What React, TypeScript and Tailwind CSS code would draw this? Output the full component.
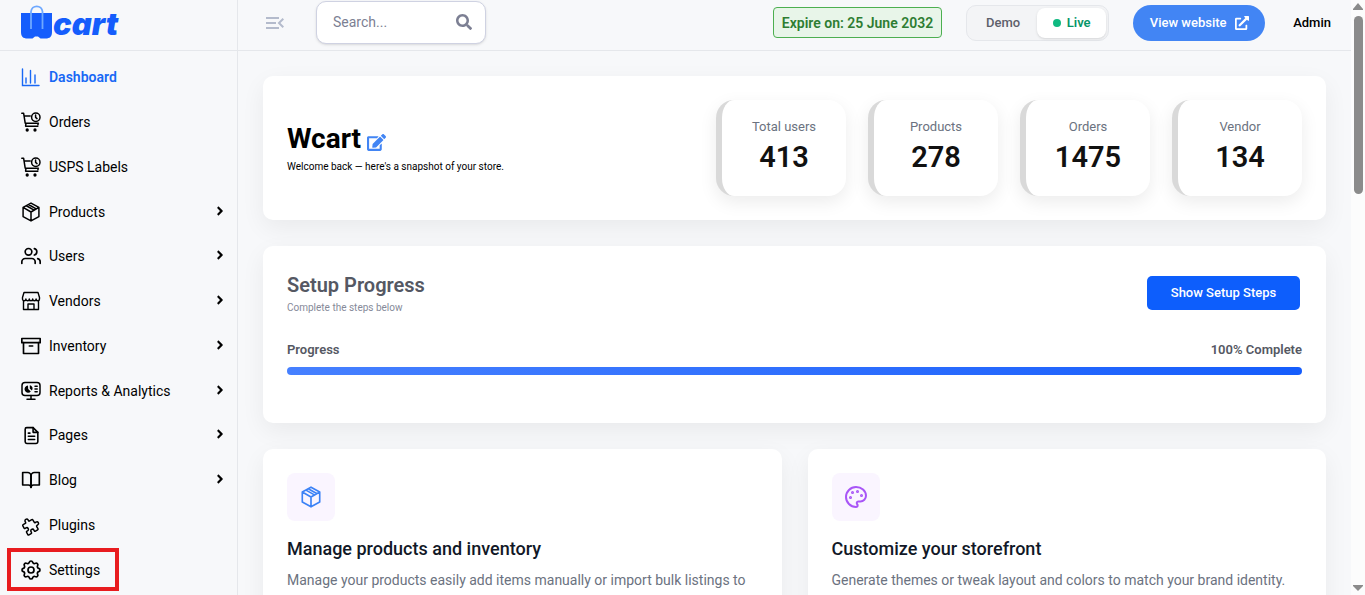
import type { ReactNode } from "react";
import { FaAngleRight, FaEdit, FaExternalLinkAlt, FaSearch } from "react-icons/fa";
import { FiArchive, FiBookOpen, FiFileText, FiUsers } from "react-icons/fi";
import { LuPalette } from "react-icons/lu";
import { MdMenuOpen } from "react-icons/md";
import { TbPuzzle, TbSettings } from "react-icons/tb";

const ChartIcon = () => (
  <svg className="size-5" viewBox="0 0 20 20" fill="none" stroke="currentColor" strokeWidth="1.4" strokeLinecap="round">
    <path d="M1.500 2v16.500h16.500M5 11v5M9.500 3.500v12.500M14 8v8" />
  </svg>
);

const CartClockIcon = () => (
  <svg className="size-5" viewBox="0 0 20 20" fill="none" stroke="currentColor" strokeWidth="1.5" strokeLinecap="round" strokeLinejoin="round">
    <path d="M.8 1.200h1.800l1.600 10h13.200M3.200 4h6M5 11.200l-.4 3h12.200M17 11.200v1.600" />
    <circle cx="14.800" cy="5.200" r="4.200" />
    <path d="M14.600 3v2.400l1.400 1.200" />
    <circle cx="6.200" cy="18" r=".9" fill="currentColor" />
    <circle cx="14" cy="18" r=".9" fill="currentColor" />
  </svg>
);

const BoxIcon = () => (
  <svg className="size-full" viewBox="0 0 24 24" fill="none" stroke="currentColor" strokeWidth="1.8" strokeLinejoin="round">
    <path d="M12 1.300 21.500 6.500v11L12 22.700 2.500 17.500v-11zM2.500 6.500 12 12l9.500-5.500M12 12v10.700M6.500 4.500l9.200 5.200M9 3l9.200 5.200" />
  </svg>
);

const StoreIcon = () => (
  <svg className="size-5" viewBox="0 0 20 20" fill="none" stroke="currentColor" strokeWidth="1.4" strokeLinejoin="round">
    <path d="M3 1.500h14l1.500 5v1.500c0 2.400-3.400 2.400-3.400 0 0 2.400-3.400 2.400-3.400 0 0 2.400-3.400 2.400-3.400 0 0 2.400-3.400 2.400-3.400 0 0 2.400-3.400 2.400-3.400 0V6.500zM2.500 9.500v9h15v-9M7 18.500V13h6v5.500" />
  </svg>
);

const ReportIcon = () => (
  <svg className="size-5" viewBox="0 0 20 20" fill="none" stroke="currentColor" strokeWidth="1.5" strokeLinecap="round">
    <rect x="1" y="1.500" width="18" height="13" rx="3" />
    <path d="M10 14.500v3.500M6 18.200h8M14 5.300h2.200M14 8h2.200M14 10.700h2.200" />
    <path d="M7 4.500a3.600 3.600 0 1 0 2.800 6L7.200 8zM8.800 4.200v3.400l2 2c1.600-2.200.6-4.800-2-5.400z" fill="currentColor" stroke="none" />
  </svg>
);

type NavItem = {
  label: string;
  icon: ReactNode;
  active?: boolean;
  hasMenu?: boolean;
  marked?: boolean;
};

const navItems: NavItem[] = [
  { label: "Dashboard", icon: <ChartIcon />, active: true },
  { label: "Orders", icon: <CartClockIcon /> },
  { label: "USPS Labels", icon: <CartClockIcon /> },
  { label: "Products", icon: <BoxIcon />, hasMenu: true },
  { label: "Users", icon: <FiUsers className="size-5" />, hasMenu: true },
  { label: "Vendors", icon: <StoreIcon />, hasMenu: true },
  { label: "Inventory", icon: <FiArchive className="size-5" />, hasMenu: true },
  { label: "Reports & Analytics", icon: <ReportIcon />, hasMenu: true },
  { label: "Pages", icon: <FiFileText className="size-[19px]" />, hasMenu: true },
  { label: "Blog", icon: <FiBookOpen className="size-5" />, hasMenu: true },
  { label: "Plugins", icon: <TbPuzzle className="size-5 -rotate-30" strokeWidth={1.8} /> },
  { label: "Settings", icon: <TbSettings className="size-6 shrink-0" strokeWidth={1.7} />, marked: true },
];

const stats = [
  { label: "Total users", value: 413 },
  { label: "Products", value: 278 },
  { label: "Orders", value: 1475 },
  { label: "Vendor", value: 134 },
];

const Logo = () => (
  <a href="#" className="flex items-start text-[#155dfc]" aria-label="Wcart">
    <svg className="h-9 w-8 shrink-0" viewBox="0 0 32 36" fill="none">
      <path d="M0 9h31v19c0 4.500-2 6.500-6.500 6.500h-5l-2.500-2h-3l-2.500 2h-5C2 34.500 0 32.500 0 28z" fill="#155dfc" />
      <path d="M10 25V7.500a5.800 6 0 0 1 11.500 0V25" stroke="#6ea8ff" strokeWidth="1.800" />
    </svg>
    <span className="font-['Inter'] text-[31px] leading-10 font-black italic">cart</span>
  </a>
);

const Sidebar = () => (
  <aside className="flex w-[238px] shrink-0 flex-col border-r border-[#e5e7eb]">
    <div className="h-[51px] shrink-0 border-b border-[#e5e7eb] pt-1 pl-[21px]">
      <Logo />
    </div>
    <nav className="flex flex-1 flex-col pt-1 pb-[3px]">
      {navItems.map((item) => (
        <a
          key={item.label}
          href="#"
          className={`relative flex min-h-10 flex-1 items-center pr-2.5 pl-[21px] text-sm ${item.active ? "font-semibold text-[#1868f5]" : "text-black"}`}
        >
          <span className="flex size-5 shrink-0 items-center justify-center">{item.icon}</span>
          <span className="ml-2 flex-1">{item.label}</span>
          {item.hasMenu && <FaAngleRight className="mb-0.5 size-3.5" />}
          {item.marked && <span className="absolute inset-y-px left-[7px] w-28 border-4 border-[#e81c1f]" />}
        </a>
      ))}
    </nav>
  </aside>
);

const Header = () => (
  <header className="flex h-[51px] shrink-0 items-start border-b border-[#e5e7eb] pr-5 pl-[25px]">
    <button type="button" aria-label="Collapse menu" className="mt-[11px] text-[#b4bbcc]">
      <MdMenuOpen className="size-6" />
    </button>
    <label className="mt-px ml-[29px] flex h-[43px] w-[170px] items-center rounded-[10px] border border-[#cfd2e2] bg-white px-4 pb-0.5 shadow-sm">
      <input
        type="text"
        aria-label="Search"
        placeholder="Search..."
        className="w-0 flex-1 text-sm outline-none placeholder:text-[#7c7f93]"
      />
      <FaSearch className="mr-[-3px] size-4 text-[#7c7f93]" />
    </label>
    <div className="mt-[7px] ml-auto flex h-[31px] items-center rounded border border-[#4caf50] bg-[#e8f5e9] px-2 text-sm font-semibold whitespace-nowrap text-[#2e7d32]">
      Expire on: 25 June 2032
    </div>
    <div className="mt-[5px] ml-6 flex h-9 rounded-[10px] border border-[#e5e7eb] bg-[#f3f4f6] p-0.5 text-[13px] font-medium">
      <button type="button" className="w-[68px] text-[#5d606b]">Demo</button>
      <button type="button" className="flex w-[69px] items-center justify-center gap-1.5 rounded-lg bg-white font-semibold text-[#059669] shadow-sm">
        <span className="size-2 rounded-full bg-[#10b981]" />
        Live
      </button>
    </div>
    <a href="#" className="mt-[5px] ml-6 flex h-9 w-[132px] items-center justify-center gap-2 rounded-full bg-[#4285f4] text-[13px] font-medium text-white">
      View website
      <FaExternalLinkAlt className="size-3.5" />
    </a>
    <a href="#" className="mt-[13px] ml-7 text-[13px] leading-5 font-medium text-black">Admin</a>
  </header>
);

const Card = ({ className = "", children }: { className?: string; children: ReactNode }) => (
  <section className={`rounded-[10px] bg-white p-6 shadow-[0_8px_24px_rgba(0,0,0,0.06)] ${className}`}>{children}</section>
);

const FeatureCard = ({ icon, title, text }: { icon: ReactNode; title: string; text: string }) => (
  <Card className="min-w-0 flex-1">
    <div className="flex size-12 items-center justify-center rounded-lg bg-[#faf5ff]">{icon}</div>
    <h3 className="mt-4 text-lg leading-6 font-medium text-[#111827]">{title}</h3>
    <p className="mt-[7px] text-sm leading-6 text-[#6b7280]">{text}</p>
  </Card>
);

// Always-visible scroll track on the right edge
const ScrollTrack = () => (
  <div className="flex w-3.5 shrink-0 flex-col items-center bg-[#fcfcfc] py-[3px]">
    <svg className="h-2 w-2.5" viewBox="0 0 10 8" fill="#8b8b8b"><path d="M5 0 10 6v1H0V6z" /></svg>
    <div className="mt-[5px] h-[178px] w-[9px] rounded-full bg-[#8b8b8b]" />
    <svg className="mt-auto h-2 w-2.5" viewBox="0 0 10 8" fill="#8b8b8b"><path d="M5 7 0 2V1h10v1z" /></svg>
  </div>
);

export default function App() {
  return (
    <div className="flex h-screen overflow-hidden bg-[#f7f8fa] font-['Roboto',sans-serif]">
      <Sidebar />
      <div className="flex min-w-0 flex-1 flex-col">
        <Header />
        <main className="flex flex-1 flex-col gap-[26px] overflow-hidden p-[25px]">
          <Card className="flex shrink-0 items-center justify-between">
            <div className="pt-0.5">
              <h1 className="flex items-center gap-1.5 text-[28px] leading-9 font-bold text-black">
                Wcart
                <button type="button" aria-label="Edit store name" className="mt-1.5 text-[#4285f4]">
                  <FaEdit className="size-[19px]" />
                </button>
              </h1>
              <p className="text-[10px] leading-5 text-black">Welcome back — here's a snapshot of your store.</p>
            </div>
            <div className="flex gap-[22px]">
              {stats.map((stat) => (
                <div
                  key={stat.label}
                  className="flex h-24 w-[130px] flex-col items-center rounded-[18px] border-l-[6px] border-[#d9d9d9] bg-white pt-[17px] shadow-[0_6px_18px_rgba(0,0,0,0.08)]"
                >
                  <span className="text-[13px] leading-5 text-[#6b7280]">{stat.label}</span>
                  <span className="text-[29px] leading-10 font-semibold text-[#111111]">{stat.value}</span>
                </div>
              ))}
            </div>
          </Card>

          <Card className="h-[177px] shrink-0">
            <div className="flex items-start justify-between">
              <div>
                <h2 className="pt-px text-xl leading-7 font-semibold text-[#555863]">Setup Progress</h2>
                <p className="text-[10px] leading-[18px] text-[#868a99]">Complete the steps below</p>
              </div>
              <button type="button" className="mt-1.5 mr-0.5 h-[34px] w-[153px] rounded-[5px] bg-[#0d5efc] text-[13px] font-medium text-white">
                Show Setup Steps
              </button>
            </div>
            <div className="mt-[23px] flex justify-between text-[13px] leading-5 font-semibold text-[#555863]">
              <span>Progress</span>
              <span>100% Complete</span>
            </div>
            <div
              role="progressbar"
              aria-label="Setup progress"
              aria-valuenow={100}
              className="mt-[7px] h-2 w-full rounded-full bg-linear-to-r from-[#4680ff] to-[#155dfc]"
            />
          </Card>

          <div className="flex shrink-0 gap-[26px]">
            <FeatureCard
              icon={<span className="size-[22px] text-[#3b82f6]"><BoxIcon /></span>}
              title="Manage products and inventory"
              text="Manage your products easily add items manually or import bulk listings to"
            />
            <FeatureCard
              icon={<LuPalette className="size-6 text-[#a855f7]" />}
              title="Customize your storefront"
              text="Generate themes or tweak layout and colors to match your brand identity."
            />
          </div>
        </main>
      </div>
      <ScrollTrack />
    </div>
  );
}
